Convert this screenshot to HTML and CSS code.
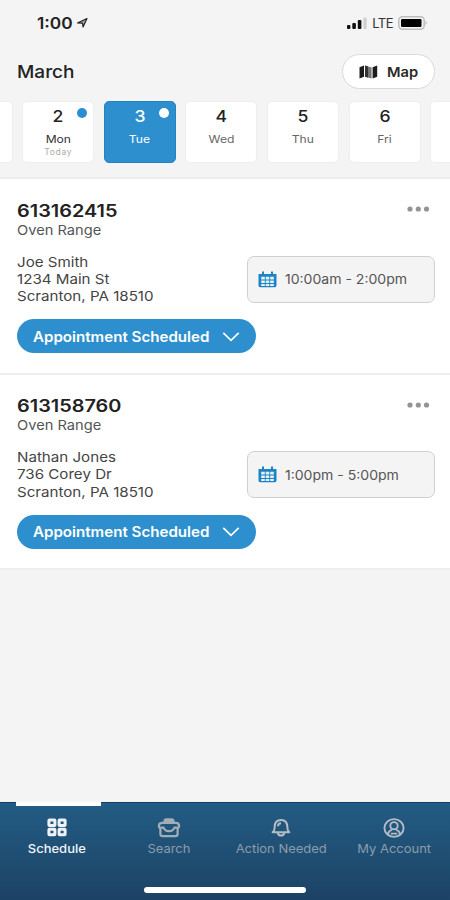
FILE: index.html
```html
<!DOCTYPE html>
<html lang="en">
<head>
  <meta charset="UTF-8">
  <meta name="viewport" content="width=device-width, initial-scale=1.0">
  <title>Schedule</title>
  <link rel="stylesheet" href="styles.css">
</head>
<body>
  <header>
    <div class="status-bar">
      <div class="status-time">
        <span class="clock">1:00</span>
        <svg width="13" height="12" viewBox="0 0 13 12"><path d="M1.5 6 L11 1.5 L7 10 L6.6 6.2 Z" fill="#aaa" stroke="#222" stroke-width="1.2" stroke-linejoin="round"/></svg>
      </div>
      <div class="status-icons">
        <svg width="20" height="12" viewBox="0 0 20 12">
          <rect x="0" y="8" width="3.4" height="4" rx="1" fill="#111"/>
          <rect x="5.3" y="6" width="3.6" height="6" rx="1" fill="#111"/>
          <rect x="10.8" y="3" width="3.6" height="9" rx="1" fill="#111"/>
          <rect x="16.4" y="0.5" width="3.2" height="11.5" rx="1" fill="#cfcfcf"/>
        </svg>
        <span class="lte">LTE</span>
        <svg width="30" height="14" viewBox="0 0 30 14">
          <rect x="0.8" y="0.8" width="25.4" height="12.4" rx="3.6" fill="#f4f4f4" stroke="#bdbdbd" stroke-width="1.5"/>
          <rect x="3" y="3" width="20.5" height="8" rx="1.2" fill="#000"/>
          <path d="M27.6 5 Q29.6 7 27.6 9 Z" fill="#a5a5a5"/>
        </svg>
      </div>
    </div>
    <div class="title-row">
      <h1>March</h1>
      <button class="map-button">
        <svg width="19" height="14" viewBox="0 0 19 14">
          <path d="M0.5 2.3 L5 0.5 V11.7 L0.5 13.5 Z" fill="#1c1c1c"/>
          <path d="M6 0.5 L12.6 2.4 V13.5 L6 11.7 Z" fill="#777"/>
          <path d="M6 0.5 L9 1.4 V12.5 L6 11.7 Z" fill="#333"/>
          <path d="M13.6 2.3 L18.2 0.5 V11.7 L13.6 13.5 Z" fill="#1c1c1c"/>
        </svg>
        <span>Map</span>
      </button>
    </div>
    <div class="days">
      <div class="day first"></div>
      <div class="day today"><b>2</b><span>Mon</span><small>Today</small><i class="dot"></i></div>
      <div class="day selected"><b>3</b><span>Tue</span><i class="dot"></i></div>
      <div class="day"><b>4</b><span>Wed</span></div>
      <div class="day"><b>5</b><span>Thu</span></div>
      <div class="day"><b>6</b><span>Fri</span></div>
      <div class="day last"></div>
    </div>
  </header>

  <main>
    <section class="job">
      <div class="job-head">
        <h2>613162415</h2>
        <svg class="more" width="23" height="6" viewBox="0 0 23 6" fill="#949494"><circle cx="3" cy="3" r="2.6"/><circle cx="11.3" cy="3" r="2.6"/><circle cx="19.5" cy="3" r="2.6"/></svg>
      </div>
      <p class="product">Oven Range</p>
      <div class="job-info">
        <div class="address">
          <p>Joe Smith</p>
          <p>1234 Main St</p>
          <p>Scranton, PA 18510</p>
        </div>
        <div class="time-box">
          <svg width="19" height="17" viewBox="0 0 19 17">
            <path d="M0.5 3 H18.5 V14.5 Q18.5 16.3 17 16.3 H2 Q0.5 16.3 0.5 14.5 Z M4 0.5 H6 V4 H4 Z M13 0.5 H15 V4 H13 Z" fill="#1d83c5"/>
            <path d="M3.2 5.8 H6.8 V8.6 H3.2 Z M7.7 5.8 H11.3 V8.6 H7.7 Z M12.2 5.8 H15.8 V8.6 H12.2 Z M3.2 9.5 H6.8 V12 H3.2 Z M7.7 9.5 H11.3 V12 H7.7 Z M12.2 9.5 H15.8 V12 H12.2 Z M3.2 12.9 H6.8 V15 H3.2 Z M7.7 12.9 H11.3 V15 H7.7 Z M12.2 12.9 H15.8 V15 H12.2 Z" fill="#e6f1f8"/>
          </svg>
          <span>10:00am - 2:00pm</span>
        </div>
      </div>
      <button class="status-button">
        <span>Appointment Scheduled</span>
        <svg width="18" height="11" viewBox="0 0 18 11"><path d="M1.3 1.8 L9 9.4 L16.7 1.8" fill="none" stroke="#fff" stroke-width="1.7"/></svg>
      </button>
    </section>

    <section class="job">
      <div class="job-head">
        <h2>613158760</h2>
        <svg class="more" width="23" height="6" viewBox="0 0 23 6" fill="#949494"><circle cx="3" cy="3" r="2.6"/><circle cx="11.3" cy="3" r="2.6"/><circle cx="19.5" cy="3" r="2.6"/></svg>
      </div>
      <p class="product">Oven Range</p>
      <div class="job-info">
        <div class="address">
          <p>Nathan Jones</p>
          <p>736 Corey Dr</p>
          <p>Scranton, PA 18510</p>
        </div>
        <div class="time-box">
          <svg width="19" height="17" viewBox="0 0 19 17">
            <path d="M0.5 3 H18.5 V14.5 Q18.5 16.3 17 16.3 H2 Q0.5 16.3 0.5 14.5 Z M4 0.5 H6 V4 H4 Z M13 0.5 H15 V4 H13 Z" fill="#1d83c5"/>
            <path d="M3.2 5.8 H6.8 V8.6 H3.2 Z M7.7 5.8 H11.3 V8.6 H7.7 Z M12.2 5.8 H15.8 V8.6 H12.2 Z M3.2 9.5 H6.8 V12 H3.2 Z M7.7 9.5 H11.3 V12 H7.7 Z M12.2 9.5 H15.8 V12 H12.2 Z M3.2 12.9 H6.8 V15 H3.2 Z M7.7 12.9 H11.3 V15 H7.7 Z M12.2 12.9 H15.8 V15 H12.2 Z" fill="#e6f1f8"/>
          </svg>
          <span>1:00pm - 5:00pm</span>
        </div>
      </div>
      <button class="status-button">
        <span>Appointment Scheduled</span>
        <svg width="18" height="11" viewBox="0 0 18 11"><path d="M1.3 1.8 L9 9.4 L16.7 1.8" fill="none" stroke="#fff" stroke-width="1.7"/></svg>
      </button>
    </section>
  </main>

  <footer>
    <nav>
      <a class="tab active">
        <svg width="22" height="20" viewBox="0 0 22 20" fill="none" stroke="#eef2f6" stroke-width="3">
          <rect x="2.9" y="1.9" width="6" height="5.6" rx="0.5"/><rect x="13.1" y="1.9" width="6" height="5.6" rx="0.5"/>
          <rect x="2.9" y="11.2" width="6" height="5.6" rx="0.5"/><rect x="13.1" y="11.2" width="6" height="5.6" rx="0.5"/>
        </svg>
        <span>Schedule</span>
      </a>
      <a class="tab">
        <svg width="24" height="20" viewBox="0 0 24 20" fill="none" stroke="#a3adb7" stroke-width="2.2">
          <path d="M7.5 4.4 V3.4 Q7.5 1.4 9.5 1.4 H14.5 Q16.5 1.4 16.5 3.4 V4.4 M8 3.2 H16"/>
          <path d="M3.4 10.4 Q1.9 9.8 1.9 8 Q1.9 4.8 5 4.8 H19 Q22.1 4.8 22.1 8 Q22.1 9.8 20.6 10.4"/>
          <path d="M3.4 9.2 V16 Q3.4 18.2 5.6 18.2 H18.4 Q20.6 18.2 20.6 16 V9.2 M3.4 9.6 H6.5 Q8 13.2 12 13.2 Q16 13.2 17.5 9.6 H20.6"/>
        </svg>
        <span>Search</span>
      </a>
      <a class="tab">
        <svg width="22" height="20" viewBox="0 0 22 20" fill="none" stroke="#b3bcc4" stroke-width="2">
          <path d="M2.6 14.2 Q4.7 12.6 4.7 9 Q4.7 2 11 2 Q17.3 2 17.3 9 Q17.3 12.6 19.4 14.2 Z" stroke-linejoin="round"/>
          <path d="M7.8 15 Q8.2 17.6 11 17.6 Q13.8 17.6 14.2 15 M8 8.2 Q8.1 5.4 11 5.2"/>
        </svg>
        <span>Action Needed</span>
      </a>
      <a class="tab">
        <svg width="22" height="20" viewBox="0 0 22 20" fill="none" stroke="#b3bcc4" stroke-width="1.9">
          <ellipse cx="11" cy="10" rx="9.6" ry="8.9"/>
          <ellipse cx="11" cy="7.7" rx="3.7" ry="3.6"/>
          <path d="M4.8 16.2 Q6 12.3 9 11.9 M17.2 16.2 Q16 12.3 13 11.9 M7.8 15.6 H14.2"/>
        </svg>
        <span>My Account</span>
      </a>
    </nav>
    <div class="home-bar"></div>
  </footer>
</body>
</html>
```
FILE: styles.css
```css
* {
  box-sizing: border-box;
}

body {
  display: flex;
  flex-direction: column;
  height: 900px;
  margin: 0;
  overflow: hidden;
  font-family: Inter, "Liberation Sans", sans-serif;
  background-color: #f4f4f4;
  color: #222;
}

h1, h2, p {
  margin: 0;
}

svg {
  display: block;
  flex-shrink: 0;
}

button {
  font-family: inherit;
  border: none;
}

/* wide lettering, grows from the left edge */
h1, h2, .product, .address, .clock, .map-button span, .time-box span, .status-button span {
  width: fit-content;
  transform: scaleX(1.08);
  transform-origin: left center;
}

header {
  height: 179px;
  border-bottom: 2px solid #ededed;
}

.status-bar {
  display: flex;
  justify-content: space-between;
  align-items: center;
  height: 46px;
  padding: 0 22px 0 37px;
}

.status-time, .status-icons {
  display: flex;
  align-items: center;
}

.clock {
  font-size: 16px;
  font-weight: 600;
  margin-right: 6px;
}

.lte {
  font-size: 13px;
  margin: 0 5px 0 5px;
  color: #333;
  letter-spacing: -0.5px;
}

.title-row {
  display: flex;
  justify-content: space-between;
  align-items: center;
  height: 51px;
  padding: 0 15px 0 17px;
}

h1 {
  font-size: 17.6px;
  font-weight: 500;
}

.map-button {
  display: flex;
  align-items: center;
  gap: 9px;
  width: 93px;
  height: 35px;
  padding: 0 0 0 16px;
  background-color: #fff;
  border: 1px solid #d9d9d9;
  border-radius: 18px;
  font-size: 13.6px;
  font-weight: 600;
  color: #2a2a2a;
}

.days {
  display: flex;
  gap: 9.6px;
  margin-top: 4px;
}

.day {
  position: relative;
  display: flex;
  flex-direction: column;
  align-items: center;
  flex: 0 0 72px;
  height: 62px;
  background-color: #fff;
  border: 1px solid #eee;
  border-radius: 5px;
  color: #666;
}

/* only the near edge of the outer days shows */
.day.first {
  flex-basis: 12.6px;
  border-left: none;
  border-radius: 0 5px 5px 0;
}

.day.last {
  flex: 1 1 0;
  border-right: none;
  border-radius: 5px 0 0 5px;
}

.day b {
  margin-top: 4px;
  font-size: 16px;
  line-height: 20px;
  font-weight: 500;
  color: #222;
  transform: scaleX(1.1);
}

.day span {
  margin-top: 7px;
  font-size: 10.8px;
  line-height: 14px;
  transform: scaleX(1.12);
}

.day small {
  font-size: 8.5px;
  line-height: 10px;
  letter-spacing: 0.7px;
  color: #aaa;
}

.dot {
  position: absolute;
  top: 6px;
  right: 6px;
  width: 10px;
  height: 10px;
  border-radius: 50%;
  background-color: #2a8fd0;
}

.today span {
  color: #333;
}

.selected, .selected b, .selected span {
  background-color: #2e8fce;
  color: #fff;
}

.selected {
  border-color: #2083c4;
}

.selected .dot {
  background-color: #fff;
}

.job {
  height: 195.5px;
  padding: 20.7px 15.5px 0 17px;
  background-color: #fff;
  border-bottom: 2px solid #ededed;
}

.job-head {
  display: flex;
  justify-content: space-between;
  align-items: center;
  height: 22px;
  padding-right: 5px;
}

.more {
  margin-bottom: 3px;
}

h2 {
  font-size: 17px;
  font-weight: 600;
  transform: scaleX(1.17);
}

.product {
  font-size: 13.2px;
  line-height: 17px;
  color: #555;
  transform: scaleX(1.11);
}

.job-info {
  display: flex;
  justify-content: space-between;
  margin-top: 15px;
}

.address {
  font-size: 13.4px;
  line-height: 17.2px;
  color: #444;
  transform: scaleX(1.13);
}

.time-box {
  display: flex;
  align-items: center;
  gap: 8px;
  width: 188px;
  height: 47px;
  margin-top: 2px;
  padding-left: 10.5px;
  background-color: #f4f4f4;
  border: 1px solid #d0d0d0;
  border-radius: 7px;
  font-size: 13px;
  color: #555;
}

.status-button {
  display: flex;
  align-items: center;
  justify-content: space-between;
  width: 238.5px;
  height: 34px;
  margin-top: 14px;
  padding: 0 16px 0 16px;
  background-color: #2e8fce;
  border-radius: 17px;
  color: #fff;
  font-size: 14px;
  font-weight: 600;
}

footer {
  height: 98px;
  margin-top: auto;
  background: linear-gradient(to bottom, #235c84, #1c4265);
  border-top: 1px solid #123f69;
}

nav {
  display: flex;
}

.tab {
  position: relative;
  display: flex;
  flex-direction: column;
  align-items: center;
  width: 112.5px;
  padding-top: 15px;
  font-size: 12px;
  line-height: 16px;
  color: #8d9cab;
}

.tab span {
  margin-top: 3px;
  white-space: nowrap;
  transform: scaleX(1.08);
}

.active {
  padding-left: 1px;
  color: #f0f5fa;
  font-weight: 500;
}

/* marker above the open tab */
.active::before {
  content: "";
  position: absolute;
  top: -1px;
  left: 16px;
  width: 85px;
  height: 4px;
  background-color: #fff;
}

.home-bar {
  width: 162px;
  height: 6px;
  margin: 30px auto 0;
  background-color: #fff;
  border-radius: 3px;
}
```
